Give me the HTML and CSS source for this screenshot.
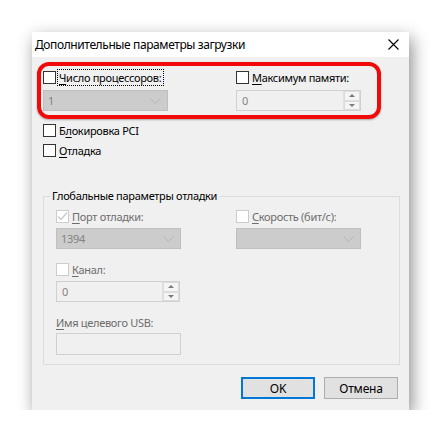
FILE: index.html
```html
<!DOCTYPE html>
<html lang="ru">
<head>
  <meta charset="UTF-8" />
  <title>Дополнительные параметры загрузки</title>
  <link rel="stylesheet" href="styles.css">
</head>
<body>
  <div class="dialog">
    <div class="title-bar">
      <span class="title">Дополнительные параметры загрузки</span>
      <svg class="close" width="11" height="11" viewBox="0 0 11 11">
        <path d="M0.5 0.5 L10.5 10.5 M10.5 0.5 L0.5 10.5" stroke="#000" stroke-width="1.1" fill="none" />
      </svg>
    </div>

    <div class="content">
      <div class="two-col">
        <label class="check">
          <span class="box"></span>
          <span class="text focused"><u>Ч</u>исло процессоров:</span>
        </label>
        <label class="check">
          <span class="box"></span>
          <span class="text"><u>М</u>аксимум памяти:</span>
        </label>
      </div>

      <div class="two-col field-row">
        <div class="select">
          <span>1</span>
          <svg class="chevron" width="11" height="6" viewBox="0 0 11 6"><path d="M0.5 0.5 L5.5 5.5 L10.5 0.5" stroke="#b4b4b4" fill="none" /></svg>
        </div>
        <div class="spin">
          <span>0</span>
          <div class="spin-btns">
            <div class="spin-btn"><span class="arrow up"></span></div>
            <div class="spin-btn"><span class="arrow down"></span></div>
          </div>
        </div>
      </div>

      <label class="check pci">
        <span class="box"></span>
        <span class="text">Б<u>л</u>окировка PCI</span>
      </label>
      <label class="check debug">
        <span class="box"></span>
        <span class="text"><u>О</u>тладка</span>
      </label>

      <fieldset class="group">
        <legend>Глобальные параметры отладки</legend>

        <div class="two-col inner">
          <label class="check off">
            <span class="box">
              <svg width="11" height="11" viewBox="0 0 11 11"><path d="M1 5.5 L4 8.5 L10 1.5" stroke="#c6c6c6" stroke-width="1.2" fill="none" /></svg>
            </span>
            <span class="text"><u>П</u>орт отладки:</span>
          </label>
          <label class="check off">
            <span class="box"></span>
            <span class="text"><u>С</u>корость (бит/с):</span>
          </label>
        </div>

        <div class="two-col inner group-field">
          <div class="select">
            <span>1394</span>
            <svg class="chevron" width="11" height="6" viewBox="0 0 11 6"><path d="M0.5 0.5 L5.5 5.5 L10.5 0.5" stroke="#b4b4b4" fill="none" /></svg>
          </div>
          <div class="select">
            <span></span>
            <svg class="chevron" width="11" height="6" viewBox="0 0 11 6"><path d="M0.5 0.5 L5.5 5.5 L10.5 0.5" stroke="#b4b4b4" fill="none" /></svg>
          </div>
        </div>

        <label class="check off channel">
          <span class="box"></span>
          <span class="text"><u>К</u>анал:</span>
        </label>
        <div class="spin small">
          <span>0</span>
          <div class="spin-btns">
            <div class="spin-btn"><span class="arrow up"></span></div>
            <div class="spin-btn"><span class="arrow down"></span></div>
          </div>
        </div>

        <div class="usb-label"><u>И</u>мя целевого USB:</div>
        <div class="textbox"></div>
      </fieldset>

      <div class="buttons">
        <button class="btn default">OK</button>
        <button class="btn">Отмена</button>
      </div>
    </div>

    <div class="highlight"></div>
  </div>
</body>
</html>
```

FILE: styles.css
```css
* {
  box-sizing: border-box;
}

body {
  margin: 0;
  background: #ffffff;
  font-family: 'Noto Sans', 'Open Sans', sans-serif;
  font-size: 11px;
  letter-spacing: -0.3px;
  color: #000;
}

.dialog {
  position: relative;
  margin: 32px 0 0 32px;
  width: 377px;
  height: 378px;
  background: #f0f0f0;
  box-shadow: 3px 6px 16px rgba(0, 0, 0, 0.45);
}

.title-bar {
  height: 25px;
  background: #ffffff;
  display: flex;
  align-items: center;
  justify-content: space-between;
  padding: 0 10px 0 3px;
}

.title {
  font-size: 12px;
  letter-spacing: -0.4px;
}

.content {
  padding: 14px 10px 0 11px;
}

.two-col {
  display: grid;
  grid-template-columns: 193px 1fr;
}

.two-col.inner {
  grid-template-columns: 180px 1fr;
}

.check {
  display: flex;
  align-items: center;
  height: 13px;
  line-height: 13px;
}

.box {
  width: 13px;
  height: 13px;
  border: 1px solid #333;
  background: #fff;
  margin-right: 3px;
  display: flex;
  align-items: center;
  justify-content: center;
  flex-shrink: 0;
}

.text {
  white-space: nowrap;
}

.text u,
.usb-label u {
  text-decoration-thickness: 1px;
  text-underline-offset: 2px;
}

.focused {
  outline: 1px dotted #000;
  outline-offset: 1px;
  padding-right: 1px;
}

.off .box {
  border-color: #cccccc;
}

.off .text,
.usb-label {
  color: #6d6d6d;
}

.field-row {
  margin-top: 6px;
}

.group-field {
  margin-top: 5px;
}

.select {
  width: 125px;
  height: 21px;
  border: 1px solid #bfbfbf;
  background: #cccccc;
  color: #838383;
  display: flex;
  align-items: center;
  justify-content: space-between;
  padding: 0 6px 0 4px;
}

.spin {
  width: 125px;
  height: 21px;
  border: 1px solid #d0d0d0;
  background: #f0f0f0;
  color: #838383;
  display: flex;
  align-items: center;
  justify-content: space-between;
  padding-left: 5px;
}

.spin.small {
  width: 124px;
  margin-top: 5px;
}

.spin-btns {
  width: 17px;
  height: 19px;
  display: flex;
  flex-direction: column;
  border-left: 1px solid #e0e0e0;
}

.spin-btn {
  flex: 1;
  display: flex;
  align-items: center;
  justify-content: center;
  border: 1px solid #dcdcdc;
  background: #f4f4f4;
}

.arrow {
  width: 0;
  height: 0;
  border-left: 3px solid transparent;
  border-right: 3px solid transparent;
}

.arrow.up {
  border-bottom: 3px solid #7a7a7a;
}

.arrow.down {
  border-top: 3px solid #7a7a7a;
}

.pci {
  margin-top: 13px;
}

.debug {
  margin-top: 7px;
}

.group {
  margin: 32px 0 0 0;
  width: 357px;
  border: 1px solid #dcdcdc;
  padding: 7px 0 9px 12px;
}

.group legend {
  padding: 0 2px;
  margin-left: -6px;
  line-height: 14px;
}

.channel {
  margin-top: 14px;
}

.usb-label {
  margin-top: 13px;
  height: 16px;
  line-height: 16px;
}

.textbox {
  margin-top: 2px;
  width: 125px;
  height: 22px;
  border: 1px solid #d0d0d0;
  background: #f0f0f0;
}

.buttons {
  display: flex;
  justify-content: flex-end;
  gap: 9px;
  margin-top: 12px;
  padding-right: 1px;
}

.btn {
  width: 74px;
  height: 22px;
  font-family: inherit;
  font-size: 12px;
  letter-spacing: -0.2px;
  background: #e1e1e1;
  border: 1px solid #adadad;
  padding: 0;
  color: #000;
}

.btn.default {
  border: 2px solid #0078d7;
}

.highlight {
  position: absolute;
  left: 5px;
  top: 30px;
  width: 344px;
  height: 57px;
  border: 4px solid #f00a0a;
  border-radius: 12px;
  box-shadow: 0 1px 2px rgba(0, 0, 0, 0.3);
}
```
